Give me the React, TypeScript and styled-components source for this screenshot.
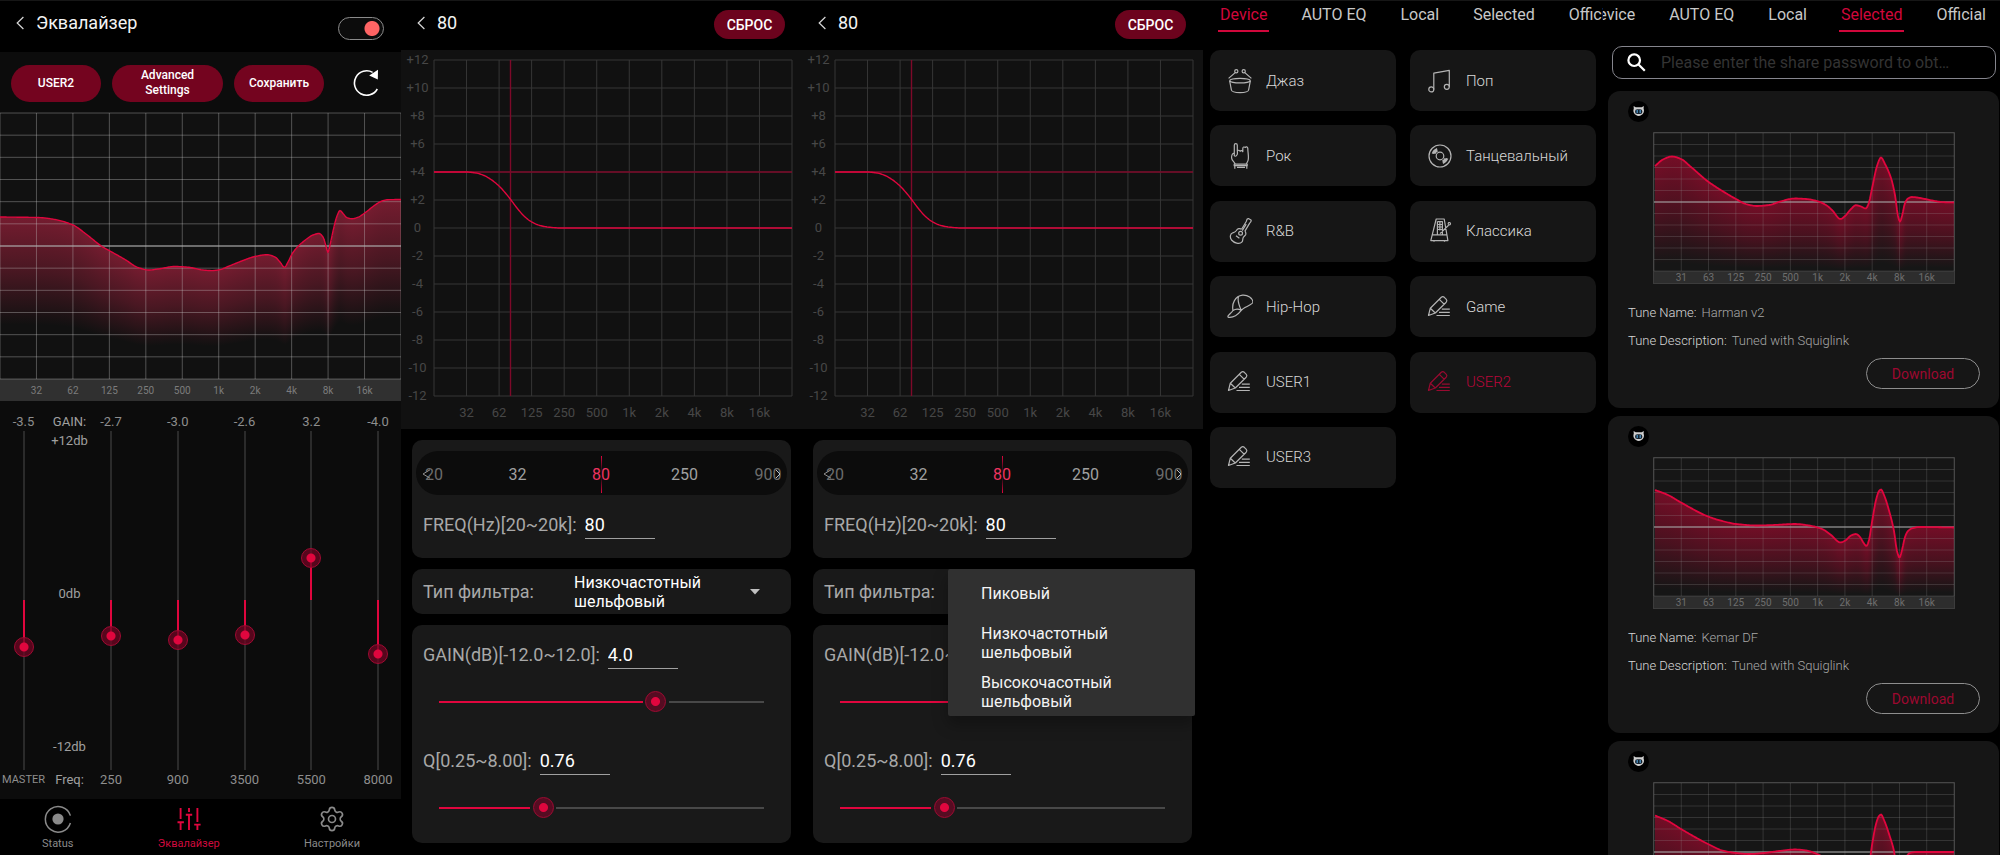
import React, { useId, useState } from "react";
import styled, { createGlobalStyle, css } from "styled-components";
import { Settings } from "lucide-react";

const RED = "#e0063e";

const GlobalStyle = createGlobalStyle`
  *, *::before, *::after { box-sizing: border-box; }
  html, body { margin: 0; background: #000; }
  body, button, input, select {
    font-family: Roboto, "Noto Sans", "Liberation Sans", sans-serif;
  }
  button { cursor: pointer; }
`;

/* ---------- shared layout ---------- */

const Page = styled.main`
  display: grid;
  grid-template-columns: 401fr 401fr 401fr 400fr 397fr;
  height: 100vh;
  overflow: hidden;
  border-top: 1px solid #161616;
  background: #000;
  color: #fff;
`;

const Screen = styled.section`
  display: flex;
  flex-direction: column;
  min-width: 0;
  overflow: hidden;
`;

const Header = styled.header<{ $tall?: boolean }>`
  display: flex;
  justify-content: space-between;
  align-items: ${(p) => (p.$tall ? "stretch" : "flex-start")};
  height: ${(p) => (p.$tall ? 51 : 49)}px;
  flex: none;
  padding: 9px 17px ${(p) => (p.$tall ? 12 : 0)}px 16px;
  background: #000;
`;

const Back = styled.a`
  display: flex;
  gap: 12px;
  height: 26px;
  align-items: center;
  color: #f4f4f4;
  text-decoration: none;
  font-size: 18px;
  line-height: 26px;
`;

const Heading = styled.h1`
  margin: 0;
  font: inherit;
`;

const Switch = styled.input`
  appearance: none;
  align-self: flex-end;
  width: 46px;
  height: 23px;
  margin: 0;
  border: 1px solid #8a8a8a;
  border-radius: 12px;
  background: radial-gradient(circle at 33px 50%, #ff6464 7px, transparent 8px) #0c0c0c;
`;

const Pill = styled.button<{ $grow?: number }>`
  flex: ${(p) => p.$grow ?? 70} 1 0;
  height: 37px;
  padding: 0 10px;
  border: 0;
  border-radius: 19px;
  background: #74041f;
  color: #fff;
  font-size: 12px;
  font-weight: 500;
  line-height: 15px;
`;

const ResetButton = styled.button`
  width: 71px;
  height: 29px;
  padding: 0;
  border: 0;
  border-radius: 15px;
  background: #6c031d;
  color: #fff;
  font-size: 14px;
  font-weight: 500;
`;

function Chevron() {
  return (
    <svg width="8" height="14" viewBox="0 0 8 14" fill="none" stroke="#d8d8d8" strokeWidth="1.2" aria-hidden="true">
      <path d="M7.4 1 1.2 7l6.2 6" />
    </svg>
  );
}

/* ---------- charts ---------- */

type Point = [number, number];

/** Samples a monotone cubic through the points, one value per unit of x. */
function sampleCurve(points: Point[], width: number): Point[] {
  const n = points.length;
  const slopes: number[] = [];
  for (let i = 0; i < n - 1; i++) {
    slopes.push((points[i + 1][1] - points[i][1]) / (points[i + 1][0] - points[i][0]));
  }
  const tangents = points.map((_, i) => {
    if (i === 0) return slopes[0];
    if (i === n - 1) return slopes[n - 2];
    const a = slopes[i - 1];
    const b = slopes[i];
    return a * b <= 0 ? 0 : (2 * a * b) / (a + b);
  });
  const out: Point[] = [];
  let seg = 0;
  for (let x = Math.ceil(points[0][0]); x <= width; x++) {
    while (seg < n - 2 && x > points[seg + 1][0]) seg++;
    const [x0, y0] = points[seg];
    const [x1, y1] = points[seg + 1];
    const h = x1 - x0;
    const t = Math.min(1, (x - x0) / h);
    const t2 = t * t;
    const t3 = t2 * t;
    const y =
      (2 * t3 - 3 * t2 + 1) * y0 +
      (t3 - 2 * t2 + t) * h * tangents[seg] +
      (3 * t2 - 2 * t3) * y1 +
      (t3 - t2) * h * tangents[seg + 1];
    out.push([x, Math.round(y * 100) / 100]);
  }
  return out;
}

const toPath = (pts: Point[]) => "M" + pts.map(([x, y]) => `${x} ${y}`).join("L");

const PlotSvg = styled.svg<{ $height: number }>`
  display: block;
  width: 100%;
  height: ${(p) => p.$height}px;
`;

interface PlotProps {
  width: number;
  height: number;
  points: Point[];
  grid: string;
  middle?: string;
  background: string;
  curveWidth: number;
  /** y at which the fill under a curve point y has faded out */
  fadeEnd?: (y: number) => number;
  fadeColor?: string;
  marker?: Point;
}

function Plot({ width, height, points, grid, middle, background, curveWidth, fadeEnd, fadeColor, marker }: PlotProps) {
  const id = useId();
  const samples = sampleCurve(points, width);
  const cols = Array.from({ length: 12 }, (_, i) => (i * width) / 11);
  const rows = Array.from({ length: 13 }, (_, i) => (i * height) / 12);
  const fixed = { vectorEffect: "non-scaling-stroke" as const };
  return (
    <PlotSvg $height={height} viewBox={`0 0 ${width} ${height}`} preserveAspectRatio="none" overflow="visible" aria-hidden="true">
      <defs>
        <linearGradient id={id} x1="0" y1="0" x2="0" y2="1">
          <stop offset="0" stopColor={fadeColor} stopOpacity="0.48" />
          <stop offset="0.5" stopColor={fadeColor} stopOpacity="0.27" />
          <stop offset="1" stopColor={fadeColor} stopOpacity="0" />
        </linearGradient>
      </defs>
      <rect width={width} height={height} fill={background} />
      {fadeEnd && (
        <g fill={`url(#${id})`} shapeRendering="crispEdges">
          {samples.slice(0, -1).map(([x, y]) => (
            <rect key={x} x={x} y={y} width="1" height={fadeEnd(y) - y} />
          ))}
        </g>
      )}
      <g stroke={grid} strokeWidth="1" fill="none">
        {cols.map((x) => (
          <path key={x} d={`M${x} 0V${height}`} {...fixed} />
        ))}
        {rows.map((y) => (
          <path key={y} d={`M0 ${y}H${width}`} {...fixed} />
        ))}
      </g>
      {middle && <path d={`M0 ${height / 2}H${width}`} stroke={middle} strokeWidth="1" {...fixed} />}
      {marker && (
        <g stroke="#7d0929" strokeWidth="1.4">
          <path d={`M${marker[0]} 0V${height}`} {...fixed} />
          <path d={`M0 ${marker[1]}H${width}`} {...fixed} />
        </g>
      )}
      <path d={toPath(samples)} fill="none" stroke={RED} strokeWidth={curveWidth} strokeLinejoin="round" {...fixed} />
    </PlotSvg>
  );
}

/* One label per vertical grid line: ten lines between eleven cells. */
const Axis = styled.div<{ $height: number; $size: number; $color: string; $bg?: string }>`
  display: grid;
  grid-template-columns: repeat(10, 1fr);
  align-items: center;
  height: ${(p) => p.$height}px;
  padding: 0 calc(100% / 22);
  background: ${(p) => p.$bg ?? "transparent"};
  color: ${(p) => p.$color};
  font-size: ${(p) => p.$size}px;
  text-align: center;
  white-space: nowrap;
`;

const AXIS_32 = ["32", "62", "125", "250", "500", "1k", "2k", "4k", "8k", "16k"];
const AXIS_31 = ["31", "63", "125", "250", "500", "1k", "2k", "4k", "8k", "16k"];

/* ---------- first screen: equalizer ---------- */

const Panel = styled.div`
  display: flex;
  flex-direction: column;
  flex: 1;
  background: #0c0c0c;
`;

const Actions = styled.div`
  display: flex;
  align-items: center;
  gap: 11px;
  height: 61px;
  padding: 1px 21px 0 11px;
`;

const RefreshButton = styled.button`
  display: flex;
  flex: none;
  margin-left: 17px;
  padding: 0;
  border: 0;
  background: none;
`;

const Mixer = styled.div`
  display: flex;
  flex: 1;
  padding: 13px 4px 11px 0;
  color: #8e8e8e;
  font-size: 13px;
  line-height: 16px;
`;

const Channel = styled.label<{ $width: number }>`
  display: flex;
  flex-direction: column;
  align-items: center;
  gap: 1px;
  width: ${(p) => p.$width}px;
  white-space: nowrap;
`;

const ChannelName = styled.span<{ $small?: boolean }>`
  margin-top: 1px;
  font-size: ${(p) => (p.$small ? 11 : 13)}px;
`;

const ScaleColumn = styled.div`
  display: flex;
  flex-direction: column;
  align-items: center;
  width: 45px;
  color: #a0a0a0;
`;

const Scale = styled.div`
  display: flex;
  flex: 1;
  flex-direction: column;
  justify-content: space-between;
  align-items: center;
  padding: 3px 0 17px;
`;

const Bands = styled.div`
  display: flex;
  flex: 1;
  justify-content: space-between;
`;

const thumb = (size: number, base: string) => css`
  &::-webkit-slider-thumb {
    appearance: none;
    width: ${size}px;
    height: ${size}px;
    border: 1px solid #a00a32;
    border-radius: 50%;
    background: radial-gradient(circle, ${RED} 4px, ${base} 5px);
  }
`;

const VerticalRange = styled.input`
  --c: calc(10px + (1 - var(--p)) * (100% - 20px));
  appearance: none;
  writing-mode: vertical-lr;
  direction: rtl;
  flex: 1;
  width: 20px;
  min-height: 0;
  margin: 0;
  background: linear-gradient(
      to bottom,
      #2b2b2b min(50%, var(--c)),
      ${RED} 0,
      ${RED} max(50%, var(--c)),
      #2b2b2b 0
    )
    center / 2px 100% no-repeat;
  ${thumb(20, "rgba(112, 4, 34, 0.75)")}
`;

const TabBar = styled.nav`
  display: flex;
  justify-content: space-between;
  flex: none;
  height: 56px;
  padding: 6px 41px 0 42px;
  background: #000;
`;

const TabLink = styled.a<{ $active?: boolean }>`
  display: flex;
  flex-direction: column;
  align-items: center;
  gap: 4px;
  color: ${(p) => (p.$active ? "#cf0a3e" : "#8a8a8a")};
  font-size: 11px;
  line-height: 14px;
  text-decoration: none;
`;

const EQ_POINTS: Point[] = [
  [0, 104], [38, 104.5], [55, 106.5], [73, 112], [86, 121], [102, 133.5], [110, 138], [125, 146.5],
  [138, 154.5], [149, 157], [158, 156], [175, 153.5], [188, 154.2], [203, 157], [212, 157.6], [220, 156.6],
  [228, 153.5], [243, 147.5], [255, 143.5], [267, 141.7], [275, 144], [280, 149], [284.5, 154.3], [288, 149],
  [292, 141], [297, 134.5], [306, 126.5], [313, 122], [319, 120.5], [323, 124], [326, 133], [328, 139.5],
  [330, 132], [333.5, 116], [337, 103], [340, 97.5], [343, 100.5], [347, 104.7], [352, 105.7], [358, 104.2],
  [366, 99], [375, 92], [382, 88], [388, 86.7], [401, 86.5],
];

const BANDS = [
  { name: "250", gain: -2.7 },
  { name: "900", gain: -3.0 },
  { name: "3500", gain: -2.6 },
  { name: "5500", gain: 3.2 },
  { name: "8000", gain: -4.0 },
];

function GainChannel({ name, gain, master }: { name: string; gain: number; master?: boolean }) {
  const [value, setValue] = useState(gain);
  const vars = { "--p": (value + 12) / 24 } as React.CSSProperties;
  return (
    <Channel $width={master ? 47 : 38}>
      {value.toFixed(1)}
      <VerticalRange
        type="range"
        min={-12}
        max={12}
        step={0.1}
        value={value}
        aria-label={name}
        style={vars}
        onChange={(e) => setValue(Number(e.target.value))}
      />
      <ChannelName $small={master}>{name}</ChannelName>
    </Channel>
  );
}

function EqualizerScreen() {
  return (
    <Screen>
      <Header $tall>
        <Back href="#">
          <Chevron />
          <Heading>Эквалайзер</Heading>
        </Back>
        <Switch type="checkbox" role="switch" defaultChecked aria-label="Эквалайзер" />
      </Header>
      <Panel>
        <Actions>
          <Pill>USER2</Pill>
          <Pill $grow={91}>Advanced Settings</Pill>
          <Pill>Сохранить</Pill>
          <RefreshButton aria-label="Refresh">
            <svg width="28" height="28" viewBox="0 0 28 28" fill="none" aria-hidden="true">
              <path d="M20.6 3.4A12.2 12.2 0 1 0 25.3 20" stroke="#fff" strokeWidth="1.6" />
              <path d="M17.2 6.4 26 .8l-.2 9.6z" fill="#fff" />
            </svg>
          </RefreshButton>
        </Actions>
        <div>
          <Plot
            width={401}
            height={266}
            points={EQ_POINTS}
            grid="rgba(200,200,200,0.36)"
            middle="#a8a8a8"
            background="#111"
            curveWidth={1.4}
            fadeEnd={(y) => 205 + (y - 87) * 0.4}
            fadeColor="#e02850"
          />
          <Axis $height={22} $size={10} $color="#7c7c7c" $bg="#303030">
            {AXIS_32.map((t) => (
              <span key={t}>{t}</span>
            ))}
          </Axis>
        </div>
        <Mixer>
          <GainChannel name="MASTER" gain={-3.5} master />
          <ScaleColumn>
            <span>GAIN:</span>
            <Scale>
              <span>+12db</span>
              <span>0db</span>
              <span>-12db</span>
            </Scale>
            <span>Freq:</span>
          </ScaleColumn>
          <Bands>
            {BANDS.map((b) => (
              <GainChannel key={b.name} {...b} />
            ))}
          </Bands>
        </Mixer>
      </Panel>
      <TabBar>
        <TabLink href="#status">
          <svg width="28" height="28" viewBox="0 0 28 28" fill="none" aria-hidden="true">
            <path d="M26.4 10.6A12.8 12.8 0 1 0 26.4 18" stroke="#8a8a8a" strokeWidth="1.5" />
            <circle cx="14" cy="14" r="5.6" fill="#8a8a8a" />
          </svg>
          Status
        </TabLink>
        <TabLink href="#equalizer" $active>
          <svg width="28" height="28" viewBox="0 0 28 28" fill="none" stroke={RED} strokeWidth="1.9" aria-hidden="true">
            <path d="M5.6 3v11M5.6 17.5V25M2.5 17.2h6.4M14 3v4M14 10v15M10.8 9.8h6.4M22.4 3v14M22.4 20.5V25M19.2 19.6h6.4" />
          </svg>
          Эквалайзер
        </TabLink>
        <TabLink href="#settings">
          <Settings size={28} strokeWidth={1.4} aria-hidden="true" />
          Настройки
        </TabLink>
      </TabBar>
    </Screen>
  );
}

/* ---------- second and third screens: filter editor ---------- */

const ChartArea = styled.div`
  display: grid;
  grid-template-columns: 33px 1fr;
  padding: 2px 10px 0 0;
  height: 379px;
  flex: none;
  background: #111;
`;

const YLabels = styled.div`
  display: flex;
  flex-direction: column;
  justify-content: space-between;
  align-items: center;
  height: 352px;
  color: #474747;
  font-size: 13px;
  line-height: 16px;
`;

const PlotBox = styled.div`
  padding-top: 8px;
`;

const Cards = styled.div`
  display: flex;
  flex-direction: column;
  gap: 11px;
  padding: 11px 11px 0;
`;

const Card = styled.div`
  position: relative;
  border-radius: 10px;
  background: #191919;
  color: #a8a8a8;
  font-size: 18px;
`;

const FreqCard = styled(Card)`
  height: 118px;
  padding: 11px 4px 0;
`;

const FreqStrip = styled.div`
  position: relative;
  display: flex;
  justify-content: space-between;
  align-items: center;
  height: 44px;
  padding: 2px 4px 0 3px;
  border-radius: 22px;
  background: #0c0c0c;
`;

const FreqOption = styled.button<{ $state?: "active" | "edge" }>`
  width: 30px;
  height: 37px;
  padding: 0;
  border: 0;
  background: ${(p) =>
    p.$state === "active"
      ? `linear-gradient(#e0063e, transparent 45%, transparent 55%, #e0063e) center / 1px 100% no-repeat`
      : "none"};
  color: ${(p) => (p.$state === "active" ? "#ee3360" : p.$state === "edge" ? "#6c6c6c" : "#a0a0a0")};
  font-size: 16px;
`;

const StripArrow = styled.svg<{ $side: "left" | "right" }>`
  position: absolute;
  ${(p) => p.$side}: 6px;
`;

const Field = styled.div`
  display: flex;
  align-items: center;
  gap: 8px;
  height: 29px;
  padding-left: 7px;
  white-space: nowrap;
`;

const FreqField = styled(Field)`
  margin-top: 15px;
`;

const NumberInput = styled.input`
  width: 70px;
  height: 29px;
  padding: 0;
  border: 0;
  border-bottom: 1px solid #a0a0a0;
  background: none;
  color: #fff;
  font-size: 18px;
  outline: 0;
`;

const FilterCard = styled(Card)`
  display: flex;
  align-items: center;
  height: 45px;
  padding-left: 11px;
`;

const FilterLabel = styled.label`
  width: 151px;
`;

const FilterPicker = styled.div`
  position: relative;
  display: flex;
  flex: 1;
  align-items: center;
  justify-content: space-between;
  padding-right: 31px;
  color: #fff;
  font-size: 16px;
  line-height: 19px;
`;

const FilterValue = styled.span`
  width: 140px;
`;

const HiddenSelect = styled.select`
  position: absolute;
  inset: 0;
  width: 100%;
  opacity: 0;
`;

const Menu = styled.ul`
  position: absolute;
  z-index: 1;
  top: 0;
  right: -3px;
  width: 247px;
  margin: 0;
  padding: 0;
  border-radius: 2px;
  background: #303030;
  box-shadow: 0 8px 16px rgba(0, 0, 0, 0.3);
  list-style: none;
`;

const MenuItem = styled.li`
  display: flex;
  align-items: center;
  height: 49px;
  padding: 0 70px 0 33px;
  color: #f4f4f4;
  font-size: 16px;
  line-height: 19px;
`;

const SlidersCard = styled(Card)`
  display: flex;
  flex-direction: column;
  height: 218px;
  padding: 15px 4px 0;
`;

const Range = styled.input`
  --c: calc(11px + var(--p) * (100% - 22px));
  appearance: none;
  height: 22px;
  margin: 22px 12px 34px;
  background: linear-gradient(
      to right,
      transparent 11px,
      ${RED} 0,
      ${RED} calc(var(--c) - 13px),
      transparent 0,
      transparent calc(var(--c) + 13px),
      #484848 0,
      #484848 calc(100% - 11px),
      transparent 0
    )
    center / 100% 2px no-repeat;
  ${thumb(21, "#560c22")}
`;

const FILTER_POINTS: Point[] = [
  [0, 112], [32, 112], [42, 113], [50, 115.5], [57, 119.5], [65, 126], [71, 132.5], [77, 140],
  [83, 148], [90, 156], [97, 161.5], [106, 165.5], [115, 167.2], [127, 168], [358, 168],
];

const Y_TICKS = ["+12", "+10", "+8", "+6", "+4", "+2", "0", "-2", "-4", "-6", "-8", "-10", "-12"];

const FILTERS = ["Пиковый", "Низкочастотный шельфовый", "Высокочасотный шельфовый"];

function FilterScreen({ menuOpen }: { menuOpen?: boolean }) {
  const id = useId();
  const [filter, setFilter] = useState(FILTERS[1]);
  const [gain, setGain] = useState(4);
  const [q, setQ] = useState(0.76);
  const gainPos = (gain + 12) / 24;
  /* Q runs on a logarithmic scale. */
  const qPos = Math.log(q / 0.25) / Math.log(32);
  return (
    <Screen>
      <Header>
        <Back href="#">
          <Chevron />
          <Heading>80</Heading>
        </Back>
        <ResetButton>СБРОС</ResetButton>
      </Header>
      <ChartArea>
        <YLabels>
          {Y_TICKS.map((t) => (
            <span key={t}>{t}</span>
          ))}
        </YLabels>
        <PlotBox>
          <Plot
            width={358}
            height={336}
            points={FILTER_POINTS}
            grid="#363636"
            background="#111"
            curveWidth={1.4}
            marker={[76.5, 112]}
          />
          <Axis $height={32} $size={13} $color="#474747">
            {AXIS_32.map((t) => (
              <span key={t}>{t}</span>
            ))}
          </Axis>
        </PlotBox>
      </ChartArea>
      <Cards>
        <FreqCard>
          <FreqStrip>
            <FreqOption $state="edge">20</FreqOption>
            <FreqOption>32</FreqOption>
            <FreqOption $state="active">80</FreqOption>
            <FreqOption>250</FreqOption>
            <FreqOption $state="edge">900</FreqOption>
            <StripArrow $side="left" width="9" height="10" viewBox="0 0 9 10" fill="none" stroke="#909090" aria-hidden="true">
              <path d="M8 .8 1 5l7 4.2" />
            </StripArrow>
            <StripArrow $side="right" width="6" height="10" viewBox="0 0 6 10" fill="none" stroke="#c0c0c0" aria-hidden="true">
              <path d="m1 1 4 4-4 4" />
            </StripArrow>
          </FreqStrip>
          <FreqField>
            <label htmlFor={`${id}f`}>FREQ(Hz)[20~20k]:</label>
            <NumberInput id={`${id}f`} defaultValue="80" />
          </FreqField>
        </FreqCard>
        <FilterCard>
          <FilterLabel htmlFor={`${id}t`}>Тип фильтра:</FilterLabel>
          <FilterPicker>
            {!menuOpen && <FilterValue aria-hidden="true">{filter}</FilterValue>}
            {!menuOpen && (
              <svg width="10" height="6" viewBox="0 0 10 6" aria-hidden="true">
                <path d="M0 0h10L5 5.5z" fill="#c0c0c0" />
              </svg>
            )}
            <HiddenSelect id={`${id}t`} value={filter} onChange={(e) => setFilter(e.target.value)}>
              {FILTERS.map((f) => (
                <option key={f}>{f}</option>
              ))}
            </HiddenSelect>
          </FilterPicker>
          {menuOpen && (
            <Menu role="listbox" aria-label="Тип фильтра">
              {FILTERS.map((f) => (
                <MenuItem key={f} role="option" aria-selected={f === filter} onClick={() => setFilter(f)}>
                  {f}
                </MenuItem>
              ))}
            </Menu>
          )}
        </FilterCard>
        <SlidersCard>
          <Field>
            <label htmlFor={`${id}g`}>GAIN(dB)[-12.0~12.0]:</label>
            <NumberInput id={`${id}g`} value={gain.toFixed(1)} readOnly />
          </Field>
          <Range
            type="range"
            min={0}
            max={1}
            step="any"
            value={gainPos}
            aria-label="GAIN"
            style={{ "--p": gainPos } as React.CSSProperties}
            onChange={(e) => setGain(Number(e.target.value) * 24 - 12)}
          />
          <Field>
            <label htmlFor={`${id}q`}>Q[0.25~8.00]:</label>
            <NumberInput id={`${id}q`} value={q.toFixed(2)} readOnly />
          </Field>
          <Range
            type="range"
            min={0}
            max={1}
            step="any"
            value={qPos}
            aria-label="Q"
            style={{ "--p": qPos } as React.CSSProperties}
            onChange={(e) => setQ(0.25 * Math.pow(32, Number(e.target.value)))}
          />
        </SlidersCard>
      </Cards>
    </Screen>
  );
}

/* ---------- category tabs ---------- */

const Tabs = styled.nav<{ $end?: boolean }>`
  display: flex;
  flex: none;
  justify-content: ${(p) => (p.$end ? "flex-end" : "flex-start")};
  gap: 30px;
  height: 31px;
  padding: 0 ${(p) => (p.$end ? 12 : 0)}px 0 ${(p) => (p.$end ? 0 : 15)}px;
  overflow: hidden;
`;

const Tab = styled.a<{ $active?: boolean }>`
  flex: none;
  padding: 4px 2px 0;
  border-bottom: 2px solid ${(p) => (p.$active ? "#d0073b" : "transparent")};
  color: ${(p) => (p.$active ? "#d0073b" : "#c8c8c8")};
  font-size: 16px;
  line-height: 20px;
  text-decoration: none;
`;

const TAB_NAMES = ["Device", "AUTO EQ", "Local", "Selected", "Official"];

function CategoryTabs({ active, end }: { active: string; end?: boolean }) {
  return (
    <Tabs $end={end}>
      {TAB_NAMES.map((t) => (
        <Tab key={t} href={`#${t}`} $active={t === active} aria-current={t === active ? "page" : undefined}>
          {t}
        </Tab>
      ))}
    </Tabs>
  );
}

/* ---------- fourth screen: presets ---------- */

const PresetGrid = styled.div`
  display: grid;
  grid-template-columns: 1fr 1fr;
  grid-auto-rows: 61px;
  column-gap: 14px;
  align-content: space-between;
  min-height: 438px;
  margin-top: 18px;
  padding: 0 7px;
`;

const Preset = styled.button<{ $active?: boolean }>`
  display: flex;
  align-items: center;
  gap: 13px;
  padding: 0 0 0 17px;
  border: 0;
  border-radius: 10px;
  background: #161616;
  color: ${(p) => (p.$active ? "#b8063a" : "#d8d8d8")};
  font-size: 15px;
  font-weight: 300;
  text-align: left;
  svg {
    stroke: ${(p) => (p.$active ? "#980a30" : "#b4b4b4")};
  }
`;

const ICONS: Record<string, React.ReactNode> = {
  drum: (
    <>
      <circle cx="9.3" cy="3.3" r="1.6" />
      <circle cx="16.7" cy="3.3" r="1.6" />
      <path d="M8.2 4.6 1.6 10.4M17.8 4.6l6.6 5.8" />
      <path d="M2.6 12.6C4 9.7 22 9.7 23.4 12.6M2.6 12.6c2 3.1 18.8 3.1 20.8 0" />
      <path d="M2.6 12.6 4.4 22c.3 1.6 4 2.6 8.6 2.6s8.3-1 8.6-2.6l1.8-9.4" />
    </>
  ),
  rock: (
    <path d="M7.3 13V2.2c0-2 3-2 3 0v6c.6-1.4 2.4-1.2 2.8.2.5-1.3 2.3-1 2.7.3V5.6c0-2 1.3-1.8 2.6-1.2.4-.9 2.3-.7 2.4 1 .1 5 1.3 9.4.2 12.2-.5 1.400-1.200 2-1.600 3.400H8.200c-.7-2.200-3.400-3.200-3.600-6-.1-2.400.4-4.600 2.700-5M7.500 13.500c1.400-.2 2.400-1 2.900-2.400V7M7.200 21.200h13v1.500h-13zM7.800 23v2.700M19.800 23v2.700M10 24.300h8" />
  ),
  guitar: (
    <>
      <path d="m14.6 11.2 4.8-8c.2-1.4 1-2.7 2-2.6l2.6 1.5c.5 1-.3 2.2-1.3 3l-4.8 8" />
      <path d="M14.6 11.2c-1.8-1.2-4.2-.6-5.2 1.3-.9 1.5-2 1.9-3.6 2.3C3 15.7 2.6 19.4 4.5 22c2.5 3 8 4.5 10.3 2.2 1.3-1.3.8-3 1.3-4.5.4-1.3 1.9-1.6 2.500-3 .6-1.600 0-2.800-.7-3.600" />
      <circle cx="13.6" cy="15.2" r="1.9" />
      <path d="m9 17.7 3.4 2.6M15.2 12.6l4-6.5" />
    </>
  ),
  cap: (
    <path d="M6 16.5C4.6 9.5 8 2.2 15.5 1.2 21 .8 25.6 4.2 26 8.2c-1.6 3.8-9.6 4.5-11.7 8.2M11.6 2.3c-1.7 4.5.6 9.5 2.7 14.1M6 16.5c2.6-1.8 5.6-1.8 8.3-.1-2.300 2.800-5.300 7.600-12.700 6.900-1-.2-.8-1.200-.2-1.800C2.600 20 4.500 18.800 6 16.500" />
  ),
  note: (
    <>
      <circle cx="4.3" cy="21.4" r="2.5" />
      <circle cx="19.8" cy="18.8" r="2.5" />
      <path d="M6.8 21.4V5.1l15.5-2.7v16.4" />
    </>
  ),
  disc: (
    <>
      <circle cx="13" cy="13" r="11" />
      <circle cx="13" cy="13" r="3.8" />
      <path d="M5.3 10.6a8 8 0 0 1 4.8-5M7.8 10.8a5.7 5.7 0 0 1 2.8-2.9M6.4 10.9a7 7 0 0 1 4-4.2M20.7 15.4a8 8 0 0 1-4.8 5M18.2 15.2a5.7 5.7 0 0 1-2.8 2.9M19.6 15.1a7 7 0 0 1-4 4.2" />
    </>
  ),
  metronome: (
    <path d="M9.2 1h8l3.7 21.6H3.8zM5 16.8h14.7M10.4 3.6h5v13M10.4 3.6v13M10.4 6.5h5M10.4 9h5M10.4 11.5h5M12.9 3.6v9M13 15.6l8.6-8.3M21.4 6.2a1.1 1.1 0 1 0 1.9-1.1 1.1 1.1 0 1 0-1.9 1.1M7 22.8v1M17.5 22.8v1" />
  ),
  pencil: (
    <path d="M1.5 21.5 3.3 14.2 14.3 3.3q1.5-1.3 3 0l2 2q1.2 1.4-.1 2.9L8.3 19zM12.3 5.3l4.8 4.9M3.3 14.2 8.3 19M14.8 15.2h8M12 18.4h10.8M9.5 21.5h13.3" />
  ),
};

const PRESETS: [string, string][] = [
  ["drum", "Джаз"], ["note", "Поп"],
  ["rock", "Рок"], ["disc", "Танцевальный"],
  ["guitar", "R&B"], ["metronome", "Классика"],
  ["cap", "Hip-Hop"], ["pencil", "Game"],
  ["pencil", "USER1"], ["pencil", "USER2"],
  ["pencil", "USER3"],
];

function PresetsScreen() {
  return (
    <Screen>
      <CategoryTabs active="Device" />
      <PresetGrid>
        {PRESETS.map(([icon, name]) => (
          <Preset key={name} $active={name === "USER2"}>
            <svg width="26" height="26" viewBox="0 0 26 26" fill="none" strokeWidth="1.2" strokeLinejoin="round" aria-hidden="true">
              {ICONS[icon]}
            </svg>
            {name}
          </Preset>
        ))}
      </PresetGrid>
    </Screen>
  );
}

/* ---------- fifth screen: shared tunes ---------- */

const Search = styled.label`
  display: flex;
  flex: none;
  align-items: center;
  gap: 15px;
  height: 33px;
  margin: 14px 4px 0 9px;
  padding: 0 14px;
  border: 1px solid #85858d;
  border-radius: 10px;
`;

const SearchInput = styled.input`
  flex: 1;
  min-width: 0;
  padding: 0;
  border: 0;
  background: none;
  color: #ddd;
  font-size: 16px;
  outline: 0;
  &::placeholder {
    color: #333;
  }
`;

const TuneList = styled.div`
  display: flex;
  flex-direction: column;
  gap: 8px;
  margin-top: 12px;
  padding: 0 1px 0 5px;
`;

const Tune = styled.article`
  display: flex;
  flex-direction: column;
  flex: none;
  height: 317px;
  padding: 10px 19px 0 20px;
  border-radius: 12px;
  background: #161616;
`;

const TuneChart = styled.div`
  margin: 10px 25px 0;
  border: 1px solid #3c3c3c;
`;

const TuneText = styled.p<{ $first?: boolean }>`
  display: flex;
  gap: 5px;
  margin: ${(p) => (p.$first ? 21 : 12)}px 0 0;
  color: #d8d8d8;
  font-size: 13px;
  font-weight: 300;
  line-height: 16px;
`;

const TuneValue = styled.span`
  color: #a8a8a8;
`;

const DownloadButton = styled.button`
  align-self: flex-end;
  width: 114px;
  height: 31px;
  margin-top: 9px;
  padding: 0;
  border: 1px solid #8e8e8e;
  border-radius: 16px;
  background: none;
  color: #9d0830;
  font-size: 14px;
`;

const TUNES: { name: string; points: Point[] }[] = [
  {
    name: "Harman v2",
    points: [
      [1, 33], [9, 26.5], [18, 23.5], [27, 26], [37, 34], [54, 48.5], [70, 59], [82, 66], [92, 71], [103, 73],
      [115, 72], [128, 68], [141, 65.5], [152, 66], [163, 68], [172, 72], [178, 77], [186.5, 86], [191, 83],
      [197, 76], [202, 72.2], [207, 73.5], [211.7, 75.5], [214.5, 71], [218, 55.5], [223, 33], [227, 24.5],
      [231, 31], [237, 45], [241, 62], [244, 83], [246, 88.5], [248, 83], [251, 70], [254, 65.5], [258, 64],
      [266, 65], [278, 67.5], [290, 69.2], [300, 69.5],
    ],
  },
  {
    name: "Kemar DF",
    points: [
      [1, 32], [14, 37], [27, 44.5], [54, 58.5], [70, 63.5], [82, 66], [103, 67.5], [120, 67], [141, 66],
      [155, 67.5], [168, 71], [177, 77], [186.5, 84.5], [192, 82], [197, 77.5], [202, 76], [206, 79], [209, 84],
      [212.5, 88], [215, 82], [218, 64], [222, 42], [225, 33], [227, 31.5], [230, 37], [236, 56], [240, 73],
      [243, 93], [245.5, 99.5], [248, 92], [251, 79], [254, 73], [259, 70], [266, 69], [300, 69.5],
    ],
  },
  {
    name: "Kemar DF v2",
    points: [
      [1, 32.5], [14, 38], [27, 46], [54, 61], [70, 68], [82, 70], [95, 71], [110, 70], [125, 68], [141, 66.5],
      [152, 67.5], [163, 71], [177, 79], [186.5, 86], [197, 78], [202, 76], [209, 84], [212.5, 88], [215, 82],
      [218, 62], [222, 41], [225, 33], [227, 31.5], [230, 37], [236, 54], [240, 68], [243, 88], [245.5, 95],
      [248, 88], [251, 76], [256, 70], [262, 69], [300, 69],
    ],
  },
];

function Avatar() {
  return (
    <svg width="21" height="21" viewBox="0 0 21 21" aria-hidden="true">
      <circle cx="10.5" cy="10.5" r="10.5" fill="#000" />
      <path
        d="M5.6 4.9 7.7 6.3h6l2.1-1.4-.2 2.9c.6 1.2.5 3-.2 4.3-1 1.900-2.800 2.800-4.700 2.800s-3.700-.9-4.700-2.800c-.7-1.300-.8-3.100-.2-4.300z"
        fill="#cfcfcf"
      />
      <rect x="7" y="8.3" width="7.4" height="4.8" rx="2.4" fill="#14202c" />
      <path d="M9.2 9v3M12.2 9v3" stroke="#4f9bd0" strokeWidth="1.2" />
    </svg>
  );
}

function TunesScreen() {
  return (
    <Screen>
      <CategoryTabs active="Selected" end />
      <Search>
        <svg width="19" height="19" viewBox="0 0 19 19" fill="none" stroke="#fff" strokeWidth="2.2" aria-hidden="true">
          <circle cx="7.2" cy="7.2" r="5.8" />
          <path d="m11.5 11.5 6.3 6.3" />
        </svg>
        <SearchInput aria-label="Share password" placeholder="Please enter the share password to obt…" />
      </Search>
      <TuneList>
        {TUNES.map((t) => (
          <Tune key={t.name}>
            <Avatar />
            <TuneChart>
              <Plot
                width={300}
                height={138}
                points={t.points}
                grid="rgba(160,160,160,0.22)"
                middle="#a8a8a8"
                background="#161616"
                curveWidth={1.8}
                fadeEnd={(y) => Math.min(138, 128 + y * 0.1)}
                fadeColor="#d80538"
              />
              <Axis $height={12} $size={10} $color="#6e6e6e" $bg="#2d2d2d">
                {AXIS_31.map((a) => (
                  <span key={a}>{a}</span>
                ))}
              </Axis>
            </TuneChart>
            <TuneText $first>
              Tune Name: <TuneValue>{t.name}</TuneValue>
            </TuneText>
            <TuneText>
              Tune Description: <TuneValue>Tuned with Squiglink</TuneValue>
            </TuneText>
            <DownloadButton>Download</DownloadButton>
          </Tune>
        ))}
      </TuneList>
    </Screen>
  );
}

export default function App() {
  return (
    <>
      <GlobalStyle />
      <Page>
        <EqualizerScreen />
        <FilterScreen />
        <FilterScreen menuOpen />
        <PresetsScreen />
        <TunesScreen />
      </Page>
    </>
  );
}
